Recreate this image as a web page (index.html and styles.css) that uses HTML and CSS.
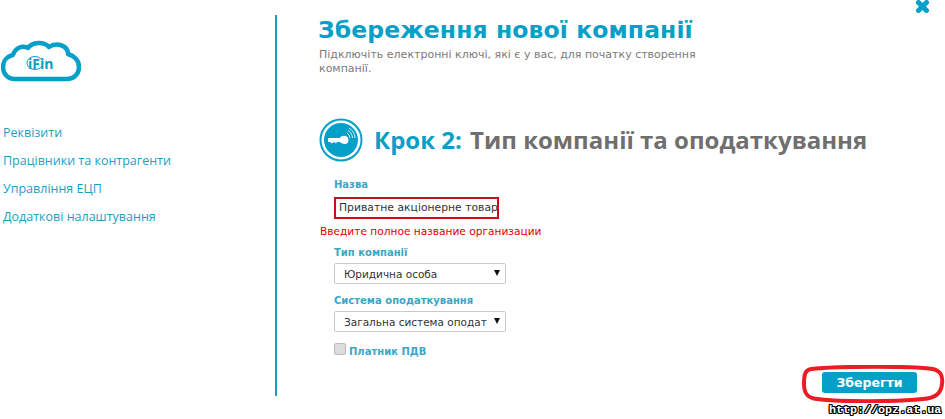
FILE: index.html
```html
<!DOCTYPE html>
<html lang="uk">
<head>
  <meta charset="UTF-8" />
  <title>iFin - Збереження нової компанії</title>
  <link rel="stylesheet" href="styles.css">
</head>
<body>
  <div class="page">
    <div class="sidebar">
      <svg class="logo" width="80" height="44" viewBox="0 0 80 44">
        <path d="M14 40 C6 40 2 34 2 28 C2 21 7 17 12 16 C14 9 21 6 27 9 C31 3 43 2 48 8 C55 3 67 6 67 15 C74 17 78 22 78 28 C78 35 73 40 66 40 Z" fill="#fff" stroke="#05a0c8" stroke-width="4.500" stroke-linejoin="round"/>
        <ellipse cx="34" cy="24" rx="8" ry="6.500" fill="none" stroke="#05a0c8" stroke-width="1"/>
        <text class="logo-text" x="27" y="30">iFin</text>
      </svg>
      <ul class="nav">
        <li>Реквізити</li>
        <li>Працівники та контрагенти</li>
        <li>Управління ЕЦП</li>
        <li>Додаткові налаштування</li>
      </ul>
    </div>

    <div class="content">
      <h1>Збереження нової компанії</h1>
      <p class="intro">Підключіть електронні ключі, які є у вас, для початку створення компанії.</p>

      <div class="step">
        <svg class="step-icon" width="44" height="44" viewBox="0 0 44 44">
          <circle cx="22" cy="22" r="20.500" fill="none" stroke="#05a0c8" stroke-width="2"/>
          <circle cx="22" cy="22" r="17" fill="#05a0c8"/>
          <path d="M9 20 H21 C22 17 28 17 29 20 C30 23 29 26 26 26 C24 26 22 25 21 24 H18 L17 25.500 L15 24 L13 25.500 L11 24 H9 Z" fill="#fff"/>
          <path d="M28 15 A6 6 0 0 1 31 20 M29 12.500 A9 9 0 0 1 33.500 20 M30 10 A12 12 0 0 1 36 20" fill="none" stroke="#cfeef6" stroke-width="1"/>
        </svg>
        <h2><span class="step-num">Крок 2:</span> Тип компанії та оподаткування</h2>
      </div>

      <form class="form">
        <label class="field-label">Назва</label>
        <div class="input-error">Приватне акціонерне товар</div>
        <div class="error-text">Введите полное название организации</div>

        <label class="field-label label-type">Тип компанії</label>
        <div class="select-box"><span>Юридична особа</span><i class="arrow"></i></div>

        <label class="field-label label-tax">Система оподаткування</label>
        <div class="select-box"><span>Загальна система оподат</span><i class="arrow"></i></div>

        <div class="check-row">
          <span class="checkbox"></span>
          <span class="field-label check-label">Платник ПДВ</span>
        </div>
      </form>
    </div>
  </div>

  <svg class="close" width="15" height="13" viewBox="0 0 15 13">
    <path d="M3.500 2.500 L11.500 10.500 M11.500 2.500 L3.500 10.500" stroke="#05a0c8" stroke-width="5" stroke-linecap="round"/>
  </svg>

  <button class="save-btn">Зберегти</button>
  <svg class="ring" width="144" height="38" viewBox="0 0 144 38">
    <path d="M10 4 C40 1 110 1 132 4 C140 6 142 11 141 19 C140 29 134 33 122 34 C90 37 40 37 16 34 C6 33 3 28 3 19 C3 10 4 5 10 4 Z" fill="none" stroke="#ed1c24" stroke-width="4"/>
  </svg>
  <div class="watermark">http://opz.at.ua</div>
</body>
</html>
```

FILE: styles.css
```css
html, body {
  margin: 0;
  padding: 0;
  height: 419px;
  overflow: hidden;
  background: #fff;
}

body {
  font-family: "DejaVu Sans", sans-serif;
  color: #6f6f6f;
}

.page {
  display: flex;
  padding-top: 15px;
}

.sidebar {
  width: 275px;
  height: 381px;
  border-right: 2px solid #1a9fc4;
}

.logo {
  display: block;
  margin: 24px 0 0 1px;
}

.logo-text {
  font-family: "Open Sans", sans-serif;
  font-size: 14px;
  font-weight: 700;
  fill: #05a0c8;
}

.nav {
  list-style: none;
  margin: 36px 0 0 3px;
  padding: 0;
  font-family: "Open Sans", sans-serif;
  font-size: 12.500px;
  line-height: 28px;
  color: #1a9fc4;
}

.content {
  padding-left: 41px;
  flex: 1;
}

h1 {
  margin: 0;
  font-size: 23.500px;
  line-height: 30px;
  font-weight: 700;
  color: #05a0c8;
  letter-spacing: 0.100px;
}

.intro {
  width: 400px;
  margin: 3px 0 0 1px;
  font-size: 11px;
  line-height: 14px;
  color: #7a7a7a;
}

.step {
  display: flex;
  align-items: center;
  margin-top: 42px;
  margin-left: 1px;
}

.step-icon {
  flex: none;
}

h2 {
  margin: 0 0 0 11px;
  font-family: "Open Sans", sans-serif;
  font-size: 24px;
  line-height: 44px;
  font-weight: 700;
  color: #6f6f6f;
  white-space: nowrap;
}

.step-num {
  color: #05a0c8;
  margin-right: 2px;
}

.form {
  margin: 16px 0 0 16px;
}

.field-label {
  display: block;
  font-size: 10px;
  line-height: 14px;
  font-weight: 700;
  color: #3ba6c6;
}

.input-error {
  width: 158px;
  height: 18px;
  margin-top: 5px;
  padding-left: 3px;
  border: 2px solid #c8101a;
  font-size: 10.800px;
  line-height: 18px;
  color: #333;
  white-space: nowrap;
  overflow: hidden;
}

.error-text {
  margin: 5px 0 0 -14px;
  font-size: 10.600px;
  line-height: 14px;
  color: #e00000;
}

.label-type {
  margin-top: 8px;
}

.label-tax {
  margin-top: 10px;
}

.select-box {
  display: flex;
  align-items: center;
  justify-content: space-between;
  box-sizing: border-box;
  width: 172px;
  height: 21px;
  margin-top: 3px;
  padding: 0 5px 0 9px;
  border: 1px solid #c9c9c9;
  border-radius: 2px;
  font-size: 10.500px;
  color: #333;
  white-space: nowrap;
}

.arrow {
  width: 0;
  height: 0;
  margin-bottom: 2px;
  border-left: 3.500px solid transparent;
  border-right: 3.500px solid transparent;
  border-top: 6px solid #111;
}

.check-row {
  display: flex;
  align-items: flex-start;
  gap: 3px;
  margin-top: 11px;
}

.check-label {
  margin-top: 2px;
}

.checkbox {
  width: 10px;
  height: 10px;
  border: 1px solid #bbb;
  border-radius: 2px;
  background: #ddd;
}

/* these sit on top of the page */
.close {
  position: absolute;
  left: 915px;
  top: 0;
}

.save-btn {
  position: absolute;
  left: 822px;
  top: 372px;
  width: 95px;
  height: 21px;
  padding: 0;
  border: none;
  border-radius: 3px;
  background: #05a0c8;
  color: #fff;
  font-family: "DejaVu Sans", sans-serif;
  font-size: 12.500px;
  font-weight: 700;
}

.ring {
  position: absolute;
  left: 801px;
  top: 365px;
}

.watermark {
  position: absolute;
  left: 829px;
  top: 402px;
  font-family: "Liberation Mono", monospace;
  font-size: 11.700px;
  font-weight: 700;
  line-height: 16px;
  color: #fff;
  text-shadow: 1px 0 #000, -1px 0 #000, 0 1px #000, 0 -1px #000, 1px 1px #000, -1px -1px #000, 1px -1px #000, -1px 1px #000;
}
```
